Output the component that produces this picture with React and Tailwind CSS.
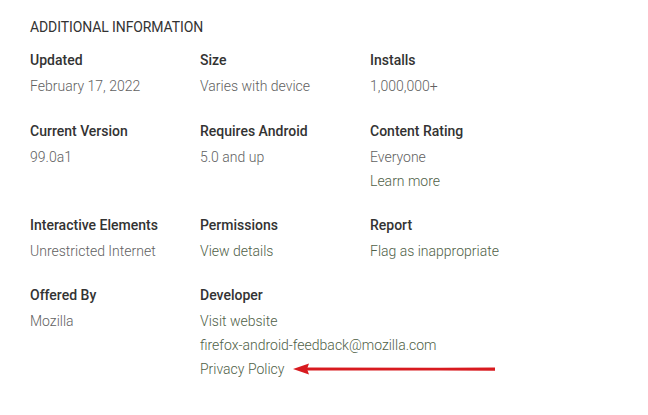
import React from 'react';

const rows = [
  [
    { label: 'Updated', values: ['February 17, 2022'] },
    { label: 'Size', values: ['Varies with device'] },
    { label: 'Installs', values: ['1,000,000+'] },
  ],
  [
    { label: 'Current Version', values: ['99.0a1'] },
    { label: 'Requires Android', values: ['5.0 and up'] },
    { label: 'Content Rating', values: ['Everyone'], links: ['Learn more'] },
  ],
  [
    { label: 'Interactive Elements', values: ['Unrestricted Internet'] },
    { label: 'Permissions', links: ['View details'] },
    { label: 'Report', links: ['Flag as inappropriate'] },
  ],
  [
    { label: 'Offered By', values: ['Mozilla'] },
    {
      label: 'Developer',
      links: ['Visit website', 'firefox-android-feedback@mozilla.com', 'Privacy Policy'],
    },
  ],
];

function InfoBlock({ item, first }) {
  return (
    <div className={first ? 'flex flex-col pb-px' : 'flex flex-col'}>
      <div className="text-[14px] leading-6 font-medium text-[#333333]">{item.label}</div>
      <div className="mt-[2px] flex flex-col">
        {(item.values || []).map((v) => (
          <span key={v} className="text-[14px] leading-6 font-light text-[#616161]">
            {v}
          </span>
        ))}
        {(item.links || []).map((l) => (
          <a key={l} className="text-[14px] leading-6 font-light text-[#4f6147] whitespace-nowrap">
            {l}
          </a>
        ))}
      </div>
    </div>
  );
}

export default function App() {
  return (
    <div className="relative w-[648px] h-[415px] bg-white pl-[30px] pt-[17px] font-['Roboto',sans-serif]">
      <h2 className="text-[14px] leading-5 font-normal text-[#333333] tracking-[-0.1px]">
        ADDITIONAL INFORMATION
      </h2>
      <div className="mt-[11px] grid grid-cols-[170px_170px_170px] gap-y-5">
        {rows.map((row, i) =>
          row.map((item) => <InfoBlock key={item.label} item={item} first={i === 0} />)
        )}
      </div>

      {/* annotation arrow */}
      <svg
        className="absolute left-[290px] top-[360px]"
        width="210"
        height="18"
        viewBox="0 0 210 18"
      >
        <path d="M14 7.6 L150 7.8 L205 7.6 L205 10.8 L150 10.6 L14 10.4 Z" fill="#d81a1f" />
        <path d="M3 9 L19 3.5 L17 9 L19 14.5 Z" fill="#d81a1f" />
      </svg>
    </div>
  );
}
